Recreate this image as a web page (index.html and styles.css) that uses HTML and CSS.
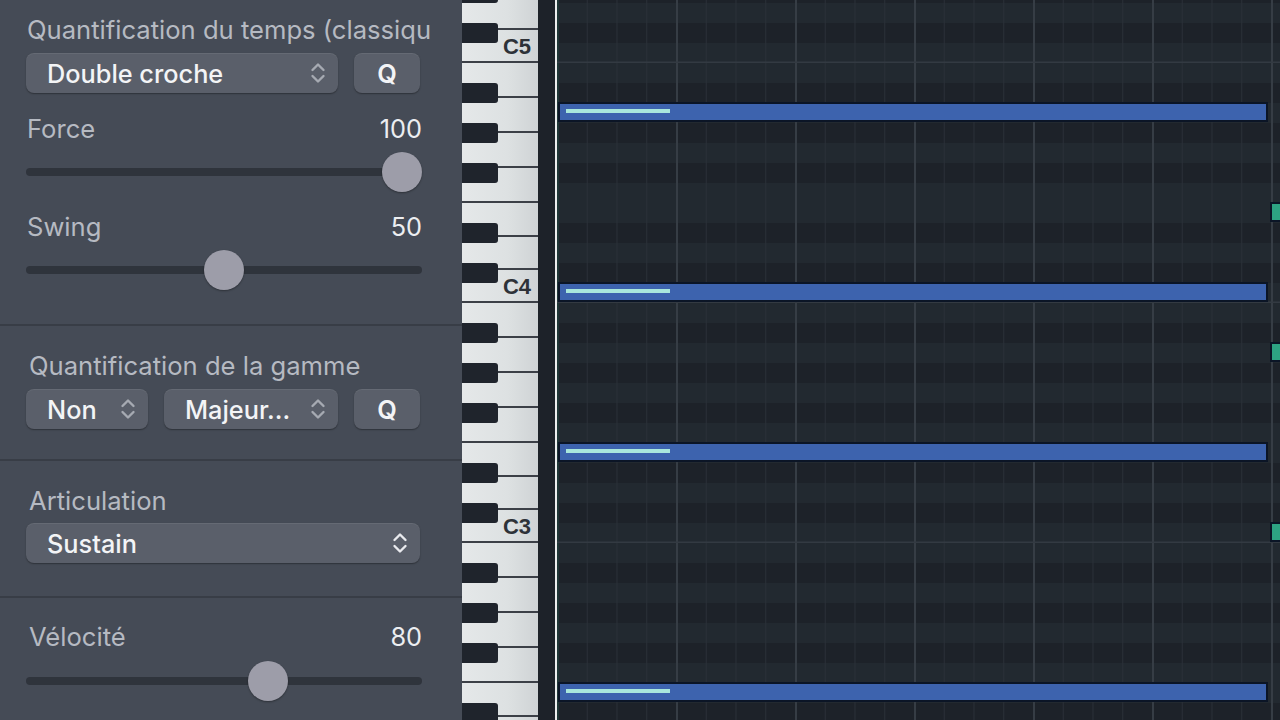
FILE: index.html
```html
<!DOCTYPE html>
<html lang="fr">
<head>
<meta charset="utf-8">
<title>Piano Roll</title>
<link rel="stylesheet" href="styles.css">
</head>
<body>
<div class="app">
  <aside class="inspector">
    <section class="group g-time">
      <div class="label-row title"><span class="label">Quantification du temps (classiqu</span></div>
      <div class="controls">
        <div class="popup w-dc"><span class="ptext">Double croche</span><svg class="chev" viewBox="0 0 16 22"><path d="M2.5 8 L8 2.5 L13.5 8 M2.5 14 L8 19.5 L13.5 14"/></svg></div>
        <div class="btn">Q</div>
      </div>
      <div class="label-row r-force"><span class="label">Force</span><span class="value">100</span></div>
      <div class="slider s-force"><div class="track"></div><div class="thumb" style="--v:1"></div></div>
      <div class="label-row r-swing"><span class="label">Swing</span><span class="value">50</span></div>
      <div class="slider s-swing"><div class="track"></div><div class="thumb" style="--v:0.5"></div></div>
    </section>
    <section class="group g-scale">
      <div class="label-row title2"><span class="label">Quantification de la gamme</span></div>
      <div class="controls c2">
        <div class="popup w-non"><span class="ptext">Non</span><svg class="chev" viewBox="0 0 16 22"><path d="M2.5 8 L8 2.5 L13.5 8 M2.5 14 L8 19.5 L13.5 14"/></svg></div>
        <div class="popup w-maj"><span class="ptext">Majeur...</span><svg class="chev" viewBox="0 0 16 22"><path d="M2.5 8 L8 2.5 L13.5 8 M2.5 14 L8 19.5 L13.5 14"/></svg></div>
        <div class="btn">Q</div>
      </div>
    </section>
    <section class="group g-art">
      <div class="label-row title2"><span class="label">Articulation</span></div>
      <div class="controls c3">
        <div class="popup w-full"><span class="ptext">Sustain</span><svg class="chev bright" viewBox="0 0 16 22"><path d="M2.5 8 L8 2.5 L13.5 8 M2.5 14 L8 19.5 L13.5 14"/></svg></div>
      </div>
    </section>
    <section class="group g-vel">
      <div class="label-row title3"><span class="label">Vélocité</span><span class="value">80</span></div>
      <div class="slider s-vel"><div class="track"></div><div class="thumb" style="--v:0.624"></div></div>
    </section>
  </aside>

  <div class="keyboard">
    <div class="whites">
      <div class="wk short"></div>
      <div class="wk short"><span class="oct">C5</span></div>
      <div class="wk long"></div>
      <div class="wk long"></div>
      <div class="wk long"></div>
      <div class="wk long"></div>
      <div class="wk short"></div>
      <div class="wk short"></div>
      <div class="wk short"><span class="oct">C4</span></div>
      <div class="wk long"></div>
      <div class="wk long"></div>
      <div class="wk long"></div>
      <div class="wk long"></div>
      <div class="wk short"></div>
      <div class="wk short"></div>
      <div class="wk short"><span class="oct">C3</span></div>
      <div class="wk long"></div>
      <div class="wk long"></div>
      <div class="wk long"></div>
      <div class="wk long"></div>
      <div class="wk short"></div>
      <div class="wk short"></div>
    </div>
    <div class="blacks">
      <div class="semi k"></div><div class="semi"></div><div class="semi k"></div><div class="semi"></div>
      <div class="semi"></div><div class="semi k"></div><div class="semi"></div><div class="semi k"></div>
      <div class="semi"></div><div class="semi k"></div><div class="semi"></div><div class="semi"></div>
      <div class="semi k"></div><div class="semi"></div><div class="semi k"></div><div class="semi"></div>
      <div class="semi"></div><div class="semi k"></div><div class="semi"></div><div class="semi k"></div>
      <div class="semi"></div><div class="semi k"></div><div class="semi"></div><div class="semi"></div>
      <div class="semi k"></div><div class="semi"></div><div class="semi k"></div><div class="semi"></div>
      <div class="semi"></div><div class="semi k"></div><div class="semi"></div><div class="semi k"></div>
      <div class="semi"></div><div class="semi k"></div><div class="semi"></div><div class="semi"></div>
      <div class="semi k"></div>
    </div>
  </div>
  <div class="gutter"></div>
  <div class="divider"></div>

  <div class="roll">
    <div class="row b"></div>
    <div class="row"></div>
    <div class="row b"></div>
    <div class="row c"></div>
    <div class="row"></div>
    <div class="row b"></div>
    <div class="row"><div class="note"><div class="vel"></div></div></div>
    <div class="row b"></div>
    <div class="row"></div>
    <div class="row b"></div>
    <div class="row"></div>
    <div class="row"><div class="stub"></div></div>
    <div class="row b"></div>
    <div class="row"></div>
    <div class="row b"></div>
    <div class="row c"><div class="note"><div class="vel"></div></div></div>
    <div class="row"></div>
    <div class="row b"></div>
    <div class="row"><div class="stub"></div></div>
    <div class="row b"></div>
    <div class="row"></div>
    <div class="row b"></div>
    <div class="row"></div>
    <div class="row"><div class="note"><div class="vel"></div></div></div>
    <div class="row b"></div>
    <div class="row"></div>
    <div class="row b"></div>
    <div class="row c"><div class="stub"></div></div>
    <div class="row"></div>
    <div class="row b"></div>
    <div class="row"></div>
    <div class="row b"></div>
    <div class="row"></div>
    <div class="row b"></div>
    <div class="row"></div>
    <div class="row"><div class="note"><div class="vel"></div></div></div>
    <div class="row b"></div>
  </div>
</div>
</body>
</html>
```

FILE: styles.css
```css
* { box-sizing: border-box; }
html, body { margin: 0; padding: 0; }
body {
  width: 1280px;
  height: 720px;
  overflow: hidden;
  background: #1e232a;
  font-family: Inter, "Noto Sans", "Liberation Sans", sans-serif;
}
.app {
  display: flex;
  width: 1280px;
  height: 720px;
  overflow: hidden;
}

/* ---------- Inspector ---------- */
.inspector {
  width: 462px;
  flex: none;
  height: 720px;
  background: #454b56;
  display: flex;
  flex-direction: column;
  overflow: hidden;
}
.group {
  display: flex;
  flex-direction: column;
  padding-left: 26px;
  border-bottom: 2px solid #383d46;
  flex: none;
}
.g-time { height: 326px; }
.g-scale { height: 135px; }
.g-art { height: 137px; }
.g-vel { border-bottom: 0; flex: 1; }

.label-row {
  width: 396px;
  height: 30px;
  display: flex;
  align-items: center;
  justify-content: space-between;
  white-space: nowrap;
  flex: none;
}
.label {
  color: #b6bac2;
  font-size: 25.6px;
}
.value {
  color: #eceef1;
  font-size: 25.3px;
}
.title { margin-top: 14px; width: 410px; padding-left: 1px; }
.title2 { margin-top: 24px; padding-left: 3px; }
.title3 { margin-top: 23px; padding-left: 3px; }
.r-force { margin-top: 20px; padding-left: 1px; }
.r-swing { margin-top: 19px; padding-left: 1px; }

.controls {
  display: flex;
  gap: 16px;
  margin-top: 9px;
  height: 40px;
  flex: none;
}
.c2 { margin-top: 9px; }
.c3 { margin-top: 8px; }

.popup, .btn {
  height: 40px;
  border-radius: 8px;
  background: #5a5f6a;
  box-shadow: inset 0 1px 0 rgba(255,255,255,0.07), 0 1px 1.5px rgba(0,0,0,0.35);
  color: #f3f4f6;
  font-size: 25.3px;
  display: flex;
  align-items: center;
}
.popup {
  padding-left: 21px;
  padding-right: 12px;
  justify-content: space-between;
}
.w-dc { width: 312px; }
.w-non { width: 122px; }
.w-maj { width: 174px; }
.w-full { width: 394px; }
.btn {
  width: 66px;
  justify-content: center;
  font-weight: 600;
}
.ptext { white-space: nowrap; font-weight: 500; }
.chev {
  width: 16px;
  height: 22px;
  flex: none;
}
.chev path {
  fill: none;
  stroke: #a6aab2;
  stroke-width: 2.4;
  stroke-linecap: round;
  stroke-linejoin: round;
}
.chev.bright path { stroke: #e9eaee; }

.slider {
  position: relative;
  width: 396px;
  height: 40px;
  display: flex;
  align-items: center;
  flex: none;
}
.s-force { margin-top: 9px; }
.s-swing { margin-top: 9px; }
.s-vel { margin-top: 10px; }
.track {
  width: 100%;
  height: 8px;
  border-radius: 4px;
  background: #2f343c;
}
.thumb {
  position: absolute;
  top: 0;
  left: calc((100% - 40px) * var(--v));
  width: 40px;
  height: 40px;
  border-radius: 50%;
  background: #9d9da9;
  box-shadow: 0 1px 2px rgba(0,0,0,0.35);
}

/* ---------- Keyboard ---------- */
.keyboard {
  position: relative;
  width: 76px;
  flex: none;
  height: 720px;
  overflow: hidden;
  background: #dfe2e3;
}
.whites {
  display: flex;
  flex-direction: column;
  margin-top: -3.33px;
}
.wk {
  flex: none;
  background: linear-gradient(90deg, #e5e8e9 0%, #dde1e2 60%, #cfd3d5 100%);
  border-bottom: 2px solid #3c4047;
  display: flex;
  align-items: center;
  justify-content: flex-end;
  padding-right: 7px;
}
.wk.short { height: 33.333px; }
.wk.long { height: 35px; }
.oct {
  font-family: "Liberation Sans", Arial, sans-serif;
  font-weight: 700;
  font-size: 22px;
  color: #2e3238;
  margin-top: 2px;
}
.blacks {
  position: absolute;
  left: 0;
  top: -17px;
  width: 100%;
  display: flex;
  flex-direction: column;
}
.semi { height: 20px; flex: none; }
.semi.k::before {
  content: "";
  display: block;
  width: 36px;
  height: 19.5px;
  margin-top: 0.3px;
  background: #1f242c;
  border-radius: 0 3px 3px 0;
}

.gutter {
  width: 17px;
  flex: none;
  background: #1d2229;
}
.divider {
  width: 2px;
  flex: none;
  background: #eceeee;
}

/* ---------- Piano roll ---------- */
.roll {
  flex: 1;
  display: flex;
  flex-direction: column;
  margin-top: -17px;
  overflow: hidden;
}
.row {
  height: 20px;
  flex: none;
  display: flex;
  align-items: flex-start;
  background-color: #222930;
  background-image:
    linear-gradient(90deg, #1f3636 0 2px, transparent 2px),
    linear-gradient(90deg, #363d45 0 1.6px, transparent 1.6px),
    linear-gradient(90deg, #2a3038 0 1.3px, transparent 1.3px);
  background-size: 100% 100%, 119px 100%, 29.75px 100%;
  background-repeat: no-repeat, repeat-x, repeat-x;
}
.row.b { background-color: #1d2229; }
.row.c { box-shadow: inset 0 -1.5px 0 #333a42; }

.note {
  margin: -1px 0 0 1px;
  width: 710px;
  height: 20px;
  border: 2px solid #0b1526;
  background: #3d63ae;
  padding: 5px 0 0 6px;
  flex: none;
}
.vel {
  width: 104px;
  height: 4px;
  background: #a9e7dc;
}
.stub {
  margin: -1px 0 0 auto;
  width: 10px;
  height: 20px;
  border: 2px solid #0b1526;
  border-right: 0;
  background: #2da383;
  flex: none;
}
```
